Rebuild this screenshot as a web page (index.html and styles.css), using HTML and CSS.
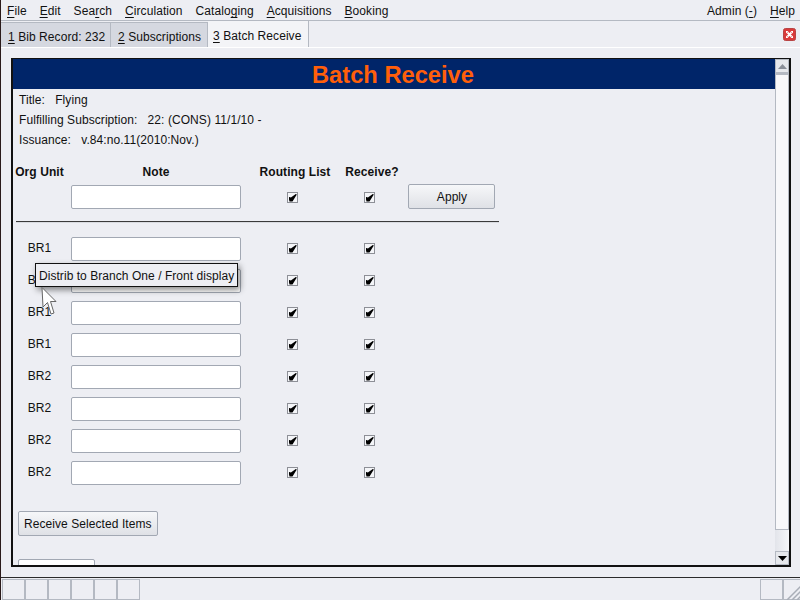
FILE: index.html
```html
<!DOCTYPE html>
<html lang="en">
<head>
<meta charset="utf-8">
<title>Batch Receive</title>
<link rel="stylesheet" href="styles.css">
</head>
<body>
<div class="app">
  <nav class="menubar">
    <span class="mi"><u>F</u>ile</span>
    <span class="mi"><u>E</u>dit</span>
    <span class="mi">Sea<u>r</u>ch</span>
    <span class="mi"><u>C</u>irculation</span>
    <span class="mi">Catalo<u>g</u>ing</span>
    <span class="mi"><u>A</u>cquisitions</span>
    <span class="mi"><u>B</u>ooking</span>
    <span class="spacer"></span>
    <span class="mi">Admin (<u>-</u>)</span>
    <span class="mi"><u>H</u>elp</span>
  </nav>
  <div class="tabbar">
    <span class="tab"><span><u>1</u> Bib Record: 232</span></span>
    <span class="tab"><span><u>2</u> Subscriptions</span></span>
    <span class="tab active"><span><u>3</u> Batch Receive</span></span>
    <span class="spacer"></span>
    <span class="close"><svg width="13" height="13" viewBox="0 0 13 13"><rect x=".5" y=".5" width="12" height="12" rx="2" fill="#d93a3a" stroke="#b84444"/><path d="M4.500 4.500l4 4M8.500 4.500l-4 4" stroke="#fff" stroke-width="1.800"/><path d="M3 3h2.500L3 5.500zM10 3H7.500L10 5.500zM3 10h2.500L3 7.500zM10 10H7.500L10 7.500z" fill="#fff"/></svg></span>
  </div>
  <main class="panel">
    <div class="frame">
      <div class="content">
        <h1 class="title">Batch Receive</h1>
        <div class="info">
          <p>Title: &nbsp; Flying</p>
          <p>Fulfilling Subscription: &nbsp; 22: (CONS) 11/1/10 -</p>
          <p>Issuance: &nbsp; v.84:no.11(2010:Nov.)</p>
        </div>
        <div class="grid head">
          <b class="c">Org Unit</b><b class="c">Note</b><b class="c">Routing List</b><b class="c">Receive?</b><span></span>
        </div>
        <div class="grid row">
          <span></span><span class="input"></span><span class="c"><i class="chk"></i></span><span class="c"><i class="chk"></i></span><span class="btn apply">Apply</span>
        </div>
        <hr class="rule">
        <div class="rows">
          <div class="grid row"><span class="c">BR1</span><span class="input"></span><span class="c"><i class="chk"></i></span><span class="c"><i class="chk"></i></span></div>
          <div class="grid row"><span class="c">BR1</span><span class="input"></span><span class="c"><i class="chk"></i></span><span class="c"><i class="chk"></i></span></div>
          <div class="grid row"><span class="c">BR1</span><span class="input"></span><span class="c"><i class="chk"></i></span><span class="c"><i class="chk"></i></span></div>
          <div class="grid row"><span class="c">BR1</span><span class="input"></span><span class="c"><i class="chk"></i></span><span class="c"><i class="chk"></i></span></div>
          <div class="grid row"><span class="c">BR2</span><span class="input"></span><span class="c"><i class="chk"></i></span><span class="c"><i class="chk"></i></span></div>
          <div class="grid row"><span class="c">BR2</span><span class="input"></span><span class="c"><i class="chk"></i></span><span class="c"><i class="chk"></i></span></div>
          <div class="grid row"><span class="c">BR2</span><span class="input"></span><span class="c"><i class="chk"></i></span><span class="c"><i class="chk"></i></span></div>
          <div class="grid row"><span class="c">BR2</span><span class="input"></span><span class="c"><i class="chk"></i></span><span class="c"><i class="chk"></i></span></div>
        </div>
        <div class="actions"><span class="btn">Receive Selected Items</span></div>
        <div class="cutoff"></div>
      </div>
      <div class="scrollbar">
        <span class="arrow"><svg width="9" height="5" viewBox="0 0 9 5"><path d="M0 5L4.500 0 9 5z" fill="#8a8f98"/></svg></span>
        <span class="thumb"></span>
        <span class="arrow"><svg width="9" height="5" viewBox="0 0 9 5"><path d="M0 0L4.500 5 9 0z" fill="#000"/></svg></span>
      </div>
      <div class="tooltip">Distrib to Branch One / Front display</div>
      <svg class="cursor" width="16" height="29" viewBox="0 0 16 29"><path d="M1 .5L2 20l4.500-4.500 3.500 11.500 3-1-3.500-11.500h5.500z" fill="#fff" stroke="#666" stroke-width="1"/></svg>
    </div>
  </main>
  <footer class="status">
    <span class="cell"></span><span class="cell"></span><span class="cell"></span><span class="cell"></span><span class="cell"></span><span class="cell"></span>
    <span class="spacer"></span>
    <span class="cell"></span>
    <span class="cell grip"><svg width="17" height="20" viewBox="0 0 17 20"><path d="M3 20L17 6M8 20L17 11M13 20L17 16" stroke="#a9aeb7" stroke-width="1.500"/></svg></span>
  </footer>
</div>
</body>
</html>
```
FILE: styles.css
```css
* { box-sizing: border-box; }
html, body { margin: 0; padding: 0; }
body { width: 800px; height: 600px; overflow: hidden; background: #edeef3; color: #111; font: 12px/14px "Liberation Sans", Arial, sans-serif; letter-spacing: .07px; }
u { text-decoration-thickness: 1px; text-underline-offset: 2px; }
p { margin: 0; }
.app { display: flex; flex-direction: column; width: 800px; height: 600px; border-left: 1px solid #2a1a1a; }
.spacer { flex: 1; }
.menubar { display: flex; align-items: center; height: 21px; padding: 2px 5px 0 6px; gap: 13px; border-bottom: 1px solid #b4b9c2; }
.tabbar { display: flex; align-items: flex-end; height: 27px; border-bottom: 1px solid #fff; }
.tab { display: flex; align-items: center; height: 25px; padding: 3px 0 0 7px; width: 97px; background: #d5d8e0; border: 1px solid #b4b9c2; border-bottom: 0; border-left: 0; }
.tab:first-child { width: 110px; }
.tab.active { width: 101px; height: 27px; background: #f3f4f7; padding: 4px 0 0 5px; }
.close { display: flex; margin: 0 4px 6px 0; }
.panel { flex: 1; padding: 10px 9px 10px 10px; }
.frame { position: relative; display: flex; height: 509px; border: 2px solid #111; border-top-width: 1px; }
.content { flex: 1; overflow: hidden; min-width: 0; }
.title { margin: 0; height: 30px; background: #002569; color: #ff5f0a; font-size: 23.7px; line-height: 32px; text-align: center; font-weight: bold; letter-spacing: 0; padding-right: 2px; }
.info { padding: 1px 0 0 6px; }
.info p { height: 20px; line-height: 20px; }
.grid { display: grid; grid-template-columns: 53px 180px 98px 56px 130px; align-items: center; justify-items: center; }
.head { margin-top: 12px; height: 20px; white-space: nowrap; letter-spacing: .07px; }
.head + .row { margin-top: -1px; }
.c { text-align: center; }
.rows .c { margin-bottom: 2px; }
.row { height: 32px; }
.input { width: 170px; height: 24px; background: #fff; border: 1px solid #a2a8b3; border-radius: 2px; }
.chk { display: block; width: 11px; height: 11px; margin-left: -6px; background: #f4f5f8; border: 1px solid #8d8f96; position: relative; }
.chk::after { content: ""; position: absolute; left: 1px; top: 1px; width: 8px; height: 8px; background: #000; clip-path: polygon(0 42%, 30% 50%, 100% 0, 100% 20%, 50% 100%, 12% 100%); }
.btn { display: inline-flex; align-items: center; justify-content: center; height: 25px; padding: 0 5px; background: linear-gradient(#f6f7f9, #dfe1e6); border: 1px solid #a2a8b3; border-radius: 2px; }
.apply { width: 87px; justify-self: start; margin-left: 8px; margin-top: -1px; padding-left: 6px; }
.rule { margin: 8px 0 0 3px; width: 483px; height: 2px; border: 0; border-top: 1px solid #3a3a3a; border-bottom: 1px solid #d9dbe0; }
.rows { margin-top: 10px; }
.actions { margin: 22px 0 0 5px; }
.cutoff { width: 77px; height: 20px; margin: 23px 0 0 5px; background: #fff; border: 1px solid #a2a8b3; border-radius: 2px; }
.scrollbar { display: flex; flex-direction: column; width: 14px; background: linear-gradient(90deg, #e2e4ea, #f6f7f9); }
.arrow { display: flex; align-items: center; justify-content: center; height: 14px; background: #e6e8ec; border: 1px solid #b4b9c2; }
.thumb { height: 457px; background: #f8f8fa; border: 1px solid #b4b9c2; border-top: 2px solid #b4b9c2; }
.scrollbar .arrow:last-child { margin-top: auto; }
.tooltip { position: absolute; left: 22px; top: 204px; height: 24px; padding: 0 3px; line-height: 24px; letter-spacing: .05px; white-space: nowrap; background: #edeef3; border: 1px solid #111; box-shadow: 2px 3px 6px rgba(0,0,0,.45); z-index: 2; }
.cursor { position: absolute; left: 28px; top: 228px; z-index: 3; }
.status { display: flex; height: 23px; border-top: 1px solid #2b2b2b; padding: 1px 0 0 1px; }
.cell { width: 23px; border: 1px solid #b4b9c2; background: #edeef3; }
.grip { width: 17px; border-right: 0; }
```
